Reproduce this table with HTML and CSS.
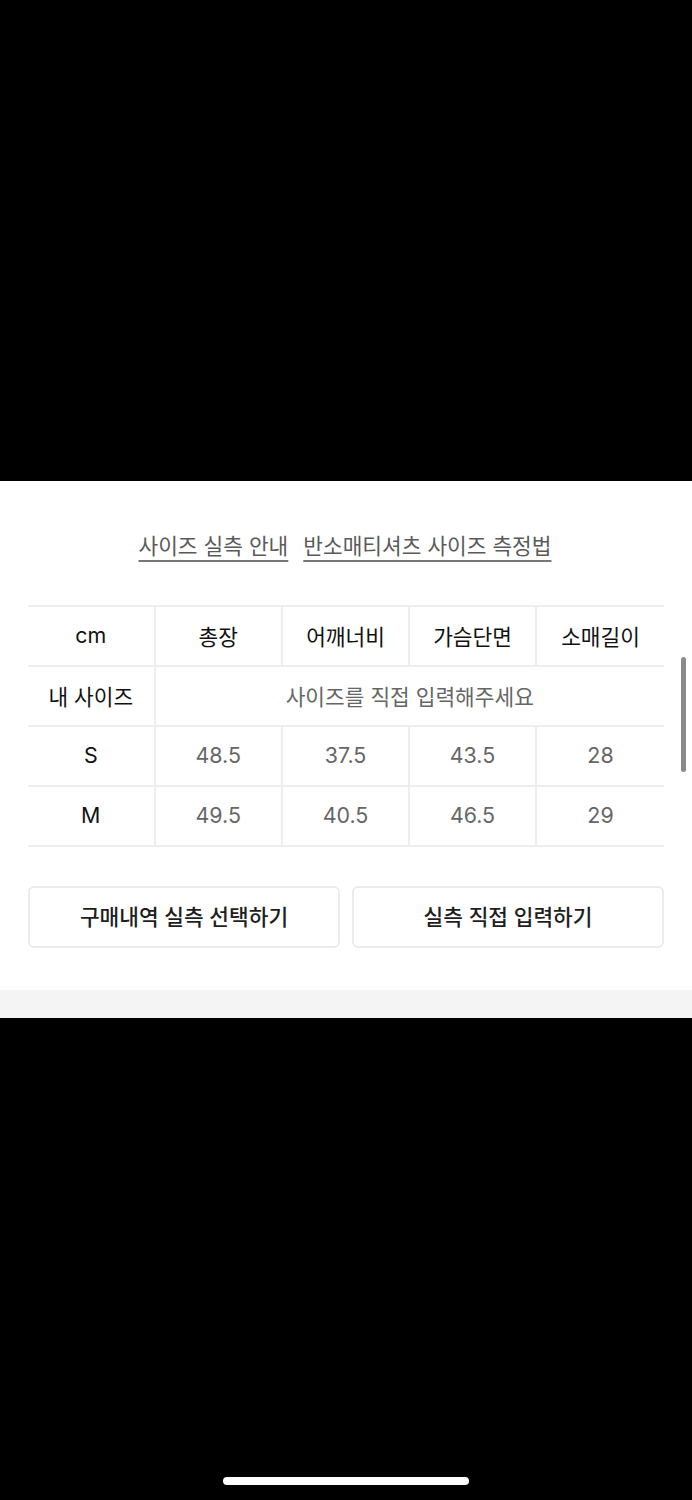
FILE: index.html
```html
<!DOCTYPE html>
<html lang="ko">
<head>
<meta charset="utf-8">
<link rel="stylesheet" href="styles.css">
</head>
<body>
<div class="screen">
  <div class="backdrop-top"></div>
  <section class="sheet">
    <nav class="links">
      <a class="link">사이즈 실측 안내</a>
      <a class="link">반소매티셔츠 사이즈 측정법</a>
    </nav>
    <div class="size-table">
      <div class="cell head first">cm</div>
      <div class="cell head">총장</div>
      <div class="cell head">어깨너비</div>
      <div class="cell head">가슴단면</div>
      <div class="cell head last">소매길이</div>

      <div class="cell head first">내 사이즈</div>
      <div class="cell hint last span4">사이즈를 직접 입력해주세요</div>

      <div class="cell head first">S</div>
      <div class="cell val">48.5</div>
      <div class="cell val">37.5</div>
      <div class="cell val">43.5</div>
      <div class="cell val last">28</div>

      <div class="cell head first">M</div>
      <div class="cell val">49.5</div>
      <div class="cell val">40.5</div>
      <div class="cell val">46.5</div>
      <div class="cell val last">29</div>
    </div>
    <div class="actions">
      <button class="btn">구매내역 실측 선택하기</button>
      <button class="btn">실측 직접 입력하기</button>
    </div>
  </section>
  <div class="strip"></div>
  <div class="backdrop-bottom"></div>
  <div class="scrollbar"></div>
  <div class="home-indicator"></div>
</div>
</body>
</html>
```
FILE: styles.css
```css
* { box-sizing: border-box; }
html, body {
  margin: 0;
  padding: 0;
  background: #000;
}
body {
  font-family: Inter, "Noto Sans CJK KR", sans-serif;
}
.screen {
  position: relative;
  width: 692px;
  height: 1500px;
  display: flex;
  flex-direction: column;
  background: #000;
  overflow: hidden;
}
.backdrop-top {
  height: 481px;
  background: #000;
  flex: none;
}
.sheet {
  background: #fff;
  height: 509px;
  flex: none;
  padding: 50px 28px 0;
  display: flex;
  flex-direction: column;
}
.links {
  display: flex;
  justify-content: center;
  gap: 15px;
  height: 30px;
  line-height: 30px;
  font-size: 21.4px;
  margin-left: -2px;
}
.link {
  color: #5a5a5a;
  text-decoration: underline;
  text-decoration-color: #777;
  text-underline-offset: 6px;
  text-decoration-thickness: 2px;
}
.size-table {
  margin-top: 44px;
  display: grid;
  grid-template-columns: 127.5fr 127.5fr 127fr 127fr 127fr;
  grid-auto-rows: 60px;
  border-top: 2px solid #eeeeee;
  width: 636px;
}
.cell {
  display: flex;
  align-items: center;
  justify-content: center;
  font-size: 21.4px;
  border-bottom: 2px solid #eeeeee;
  border-right: 2px solid #eeeeee;
  padding-bottom: 2px;
}
.cell.last { border-right: none; }
.head { color: #111; }
.val { color: #666; }
.hint { color: #666; }
.span4 { grid-column: span 4; }
.actions {
  margin-top: 39px;
  display: flex;
  gap: 12px;
}
.btn {
  flex: 1;
  height: 62px;
  background: #fff;
  border: 2px solid #ececec;
  border-radius: 6px;
  font-family: Inter, "Noto Sans CJK KR", sans-serif;
  font-size: 21.4px;
  font-weight: 500;
  color: #1e1e1e;
  padding: 0 0 4px;
}
.strip {
  height: 28px;
  background: #f4f4f4;
  flex: none;
}
.backdrop-bottom {
  flex: 1;
  background: #000;
}
.scrollbar {
  position: absolute;
  left: 681px;
  top: 657px;
  width: 5px;
  height: 115px;
  border-radius: 3px;
  background: #8a8a8a;
}
.home-indicator {
  position: absolute;
  left: 223px;
  top: 1477px;
  width: 246px;
  height: 8px;
  border-radius: 4px;
  background: #fff;
}
```
